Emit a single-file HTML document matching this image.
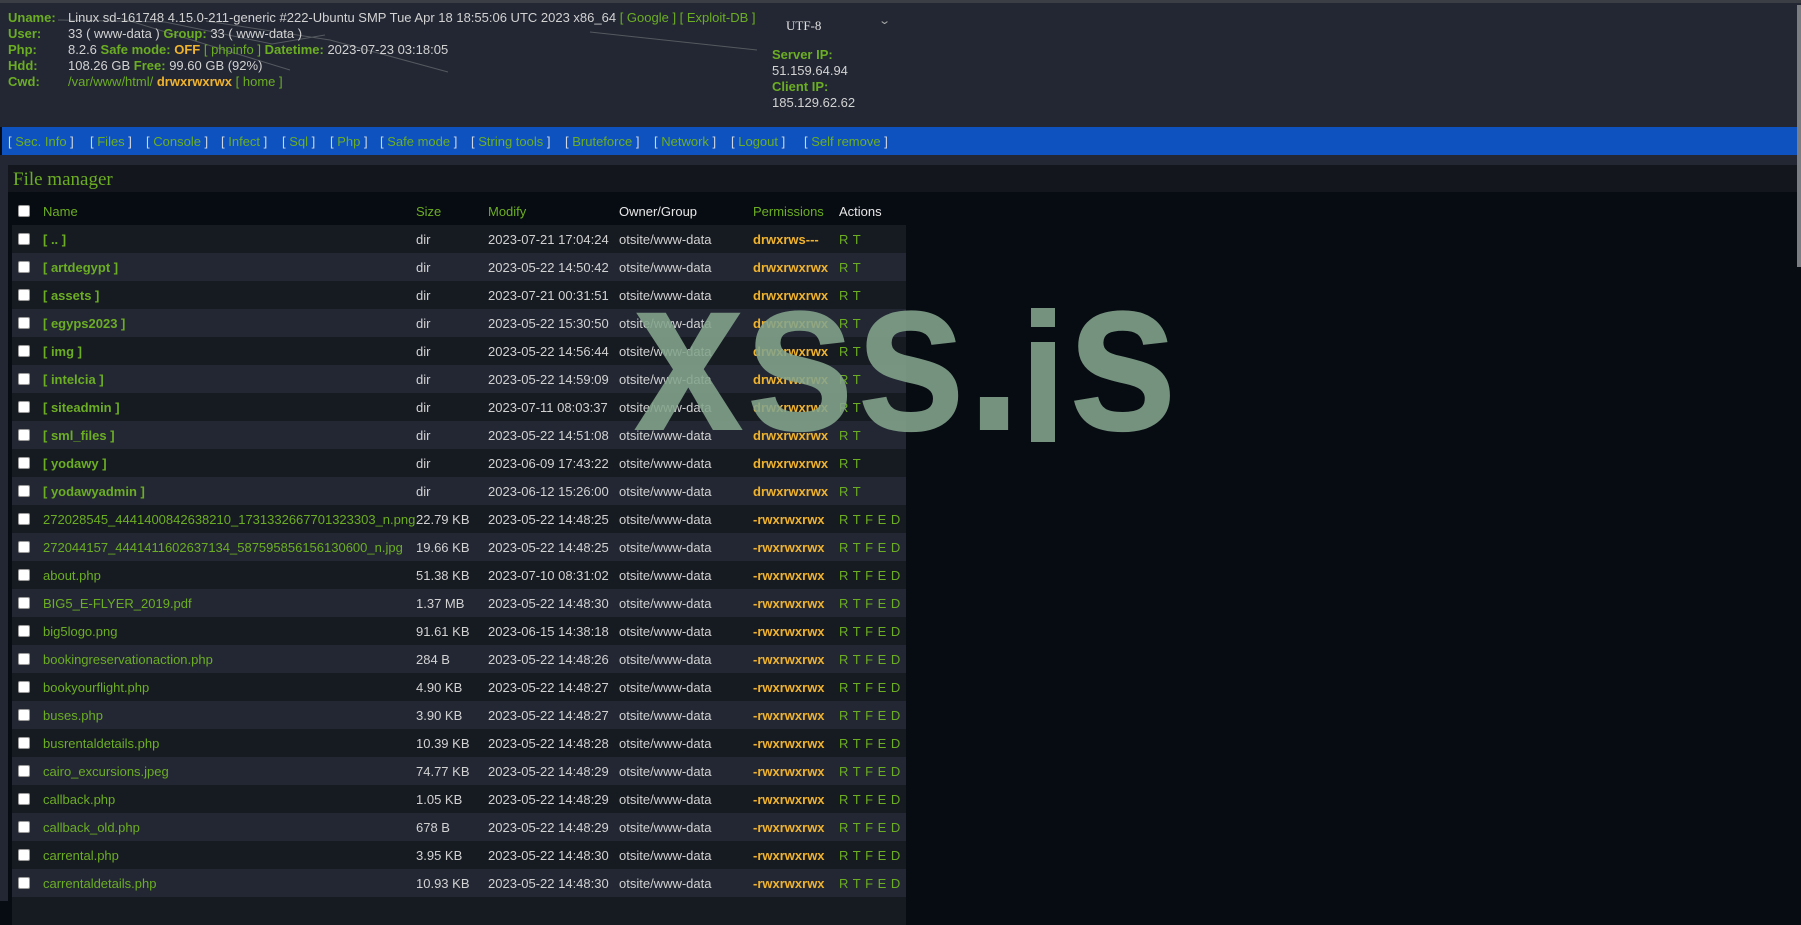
<!DOCTYPE html>
<html><head><meta charset="utf-8"><style>
*{margin:0;padding:0;box-sizing:border-box}
html,body{width:1801px;height:901px;overflow:hidden;background:#070b12;font-family:"Liberation Sans",Arial,sans-serif;font-size:13px;color:#d2d2d2}
.top{position:absolute;left:0;top:0;width:1801px;height:3px;background:#3b3e44}
.hdr{position:absolute;left:0;top:3px;width:1801px;height:124px;background:#222733}
.l{position:absolute;left:8px;font-weight:bold;color:#6cae23;line-height:16px}
.v{position:absolute;left:68px;line-height:16px;white-space:nowrap}
.g{color:#6cae23}.gb{color:#6cae23;font-weight:bold}.o{color:#f0b32e;font-weight:bold}
.nav{position:absolute;left:2px;top:127px;width:1795px;height:28px;background:#0e52bf}
.nav span{position:absolute;top:7px;color:#cfd6e0;white-space:nowrap}
.nav b{font-weight:normal;color:#6cae23}
.gap{position:absolute;left:0;top:155px;width:1801px;height:10px;background:#222733}
.lstrip{position:absolute;left:0;top:155px;width:8px;height:746px;background:#222733}
.title{position:absolute;left:8px;top:165px;width:1789px;height:27px;background:#13161d;font-family:"Liberation Serif",serif;font-size:19px;color:#6cae23;padding:4px 0 0 5px}
.row{position:absolute;left:12px;width:894px;height:28px}
.row span{position:absolute;top:7px;white-space:nowrap}
.cb{position:absolute;left:6px;top:8px;width:12px;height:12px;background:#fff;border:1px solid #999;border-radius:2px}
.d{background:#161a21}.li{background:#222733}
.nm{left:31px;color:#6cae23}.dir{font-weight:bold}
.sz{left:404px}.md{left:476px}.ow{left:607px}.pm{left:741px;color:#f0b32e;font-weight:bold}.ac{left:827px;color:#6cae23;word-spacing:1px}
.wm{position:absolute;top:243px;font-weight:bold;font-size:222px;line-height:1;color:#84a58d;opacity:.88;transform:scaleX(.9);transform-origin:0 0;white-space:nowrap}
.bx{position:absolute;background:#84a58d;opacity:.88}
.sb{position:absolute;left:1797px;top:5px;width:4px;height:262px;background:#7a7d82}
</style></head><body>
<div class="top"></div>
<div class="hdr"></div>
<svg style="position:absolute;left:0;top:0" width="800" height="80"><g stroke="#55595f" stroke-width="1" fill="none"><path d="M58 20 L165 22 L272 44 L325 35 M120 18 L290 70 M206 21 L330 40 L448 72 M590 32 L757 50"/></g></svg>
<div class="l" style="top:10px">Uname:</div><div class="v" style="top:10px">Linux sd-161748 4.15.0-211-generic #222-Ubuntu SMP Tue Apr 18 18:55:06 UTC 2023 x86_64 <span class="g">[ Google ] [ Exploit-DB ]</span></div>
<div class="l" style="top:26px">User:</div><div class="v" style="top:26px">33 ( www-data ) <span class="gb">Group:</span> 33 ( www-data )</div>
<div class="l" style="top:42px">Php:</div><div class="v" style="top:42px">8.2.6 <span class="gb">Safe mode:</span> <span class="o">OFF</span> <span class="g">[ phpinfo ]</span> <span class="gb">Datetime:</span> 2023-07-23 03:18:05</div>
<div class="l" style="top:58px">Hdd:</div><div class="v" style="top:58px">108.26 GB <span class="gb">Free:</span> 99.60 GB (92%)</div>
<div class="l" style="top:74px">Cwd:</div><div class="v" style="top:74px"><span class="g">/var/www/html/</span> <span class="o">drwxrwxrwx</span> <span class="g">[ home ]</span></div>
<div style="position:absolute;left:786px;top:18px;font-family:'Liberation Serif',serif;font-size:13px;color:#e0e0e0">UTF-8</div>
<div style="position:absolute;left:880px;top:14px;font-size:11px;color:#aaa;transform:scaleX(1.4)">&#8964;</div>
<div style="position:absolute;left:772px;top:47px;line-height:16px"><span class="gb">Server IP:</span><br>51.159.64.94<br><span class="gb">Client IP:</span><br>185.129.62.62</div>
<div class="nav">
<span style="left:6px">[ <b>Sec. Info</b> ]</span><span style="left:88px">[ <b>Files</b> ]</span><span style="left:144px">[ <b>Console</b> ]</span><span style="left:219px">[ <b>Infect</b> ]</span><span style="left:280px">[ <b>Sql</b> ]</span><span style="left:328px">[ <b>Php</b> ]</span><span style="left:378px">[ <b>Safe mode</b> ]</span><span style="left:469px">[ <b>String tools</b> ]</span><span style="left:563px">[ <b>Bruteforce</b> ]</span><span style="left:652px">[ <b>Network</b> ]</span><span style="left:729px">[ <b>Logout</b> ]</span><span style="left:802px">[ <b>Self remove</b> ]</span>
</div>
<div class="gap"></div><div class="lstrip"></div>
<div class="title">File manager</div>
<div class="row" style="top:197px"><div class="cb"></div><span class="nm">Name</span><span class="sz" style="color:#6cae23">Size</span><span class="md" style="color:#6cae23">Modify</span><span class="ow" style="color:#e8e8e8">Owner/Group</span><span class="pm" style="color:#6cae23;font-weight:normal">Permissions</span><span class="ac" style="color:#e8e8e8">Actions</span></div>
<div class="row d" style="top:225px"><div class="cb"></div><span class="nm dir">[ .. ]</span><span class="sz">dir</span><span class="md">2023-07-21 17:04:24</span><span class="ow">otsite/www-data</span><span class="pm">drwxrws---</span><span class="ac">R T</span></div>
<div class="row li" style="top:253px"><div class="cb"></div><span class="nm dir">[ artdegypt ]</span><span class="sz">dir</span><span class="md">2023-05-22 14:50:42</span><span class="ow">otsite/www-data</span><span class="pm">drwxrwxrwx</span><span class="ac">R T</span></div>
<div class="row d" style="top:281px"><div class="cb"></div><span class="nm dir">[ assets ]</span><span class="sz">dir</span><span class="md">2023-07-21 00:31:51</span><span class="ow">otsite/www-data</span><span class="pm">drwxrwxrwx</span><span class="ac">R T</span></div>
<div class="row li" style="top:309px"><div class="cb"></div><span class="nm dir">[ egyps2023 ]</span><span class="sz">dir</span><span class="md">2023-05-22 15:30:50</span><span class="ow">otsite/www-data</span><span class="pm">drwxrwxrwx</span><span class="ac">R T</span></div>
<div class="row d" style="top:337px"><div class="cb"></div><span class="nm dir">[ img ]</span><span class="sz">dir</span><span class="md">2023-05-22 14:56:44</span><span class="ow">otsite/www-data</span><span class="pm">drwxrwxrwx</span><span class="ac">R T</span></div>
<div class="row li" style="top:365px"><div class="cb"></div><span class="nm dir">[ intelcia ]</span><span class="sz">dir</span><span class="md">2023-05-22 14:59:09</span><span class="ow">otsite/www-data</span><span class="pm">drwxrwxrwx</span><span class="ac">R T</span></div>
<div class="row d" style="top:393px"><div class="cb"></div><span class="nm dir">[ siteadmin ]</span><span class="sz">dir</span><span class="md">2023-07-11 08:03:37</span><span class="ow">otsite/www-data</span><span class="pm">drwxrwxrwx</span><span class="ac">R T</span></div>
<div class="row li" style="top:421px"><div class="cb"></div><span class="nm dir">[ sml_files ]</span><span class="sz">dir</span><span class="md">2023-05-22 14:51:08</span><span class="ow">otsite/www-data</span><span class="pm">drwxrwxrwx</span><span class="ac">R T</span></div>
<div class="row d" style="top:449px"><div class="cb"></div><span class="nm dir">[ yodawy ]</span><span class="sz">dir</span><span class="md">2023-06-09 17:43:22</span><span class="ow">otsite/www-data</span><span class="pm">drwxrwxrwx</span><span class="ac">R T</span></div>
<div class="row li" style="top:477px"><div class="cb"></div><span class="nm dir">[ yodawyadmin ]</span><span class="sz">dir</span><span class="md">2023-06-12 15:26:00</span><span class="ow">otsite/www-data</span><span class="pm">drwxrwxrwx</span><span class="ac">R T</span></div>
<div class="row d" style="top:505px"><div class="cb"></div><span class="nm">272028545_4441400842638210_1731332667701323303_n.png</span><span class="sz">22.79 KB</span><span class="md">2023-05-22 14:48:25</span><span class="ow">otsite/www-data</span><span class="pm">-rwxrwxrwx</span><span class="ac">R T F E D</span></div>
<div class="row li" style="top:533px"><div class="cb"></div><span class="nm">272044157_4441411602637134_587595856156130600_n.jpg</span><span class="sz">19.66 KB</span><span class="md">2023-05-22 14:48:25</span><span class="ow">otsite/www-data</span><span class="pm">-rwxrwxrwx</span><span class="ac">R T F E D</span></div>
<div class="row d" style="top:561px"><div class="cb"></div><span class="nm">about.php</span><span class="sz">51.38 KB</span><span class="md">2023-07-10 08:31:02</span><span class="ow">otsite/www-data</span><span class="pm">-rwxrwxrwx</span><span class="ac">R T F E D</span></div>
<div class="row li" style="top:589px"><div class="cb"></div><span class="nm">BIG5_E-FLYER_2019.pdf</span><span class="sz">1.37 MB</span><span class="md">2023-05-22 14:48:30</span><span class="ow">otsite/www-data</span><span class="pm">-rwxrwxrwx</span><span class="ac">R T F E D</span></div>
<div class="row d" style="top:617px"><div class="cb"></div><span class="nm">big5logo.png</span><span class="sz">91.61 KB</span><span class="md">2023-06-15 14:38:18</span><span class="ow">otsite/www-data</span><span class="pm">-rwxrwxrwx</span><span class="ac">R T F E D</span></div>
<div class="row li" style="top:645px"><div class="cb"></div><span class="nm">bookingreservationaction.php</span><span class="sz">284 B</span><span class="md">2023-05-22 14:48:26</span><span class="ow">otsite/www-data</span><span class="pm">-rwxrwxrwx</span><span class="ac">R T F E D</span></div>
<div class="row d" style="top:673px"><div class="cb"></div><span class="nm">bookyourflight.php</span><span class="sz">4.90 KB</span><span class="md">2023-05-22 14:48:27</span><span class="ow">otsite/www-data</span><span class="pm">-rwxrwxrwx</span><span class="ac">R T F E D</span></div>
<div class="row li" style="top:701px"><div class="cb"></div><span class="nm">buses.php</span><span class="sz">3.90 KB</span><span class="md">2023-05-22 14:48:27</span><span class="ow">otsite/www-data</span><span class="pm">-rwxrwxrwx</span><span class="ac">R T F E D</span></div>
<div class="row d" style="top:729px"><div class="cb"></div><span class="nm">busrentaldetails.php</span><span class="sz">10.39 KB</span><span class="md">2023-05-22 14:48:28</span><span class="ow">otsite/www-data</span><span class="pm">-rwxrwxrwx</span><span class="ac">R T F E D</span></div>
<div class="row li" style="top:757px"><div class="cb"></div><span class="nm">cairo_excursions.jpeg</span><span class="sz">74.77 KB</span><span class="md">2023-05-22 14:48:29</span><span class="ow">otsite/www-data</span><span class="pm">-rwxrwxrwx</span><span class="ac">R T F E D</span></div>
<div class="row d" style="top:785px"><div class="cb"></div><span class="nm">callback.php</span><span class="sz">1.05 KB</span><span class="md">2023-05-22 14:48:29</span><span class="ow">otsite/www-data</span><span class="pm">-rwxrwxrwx</span><span class="ac">R T F E D</span></div>
<div class="row li" style="top:813px"><div class="cb"></div><span class="nm">callback_old.php</span><span class="sz">678 B</span><span class="md">2023-05-22 14:48:29</span><span class="ow">otsite/www-data</span><span class="pm">-rwxrwxrwx</span><span class="ac">R T F E D</span></div>
<div class="row d" style="top:841px"><div class="cb"></div><span class="nm">carrental.php</span><span class="sz">3.95 KB</span><span class="md">2023-05-22 14:48:30</span><span class="ow">otsite/www-data</span><span class="pm">-rwxrwxrwx</span><span class="ac">R T F E D</span></div>
<div class="row li" style="top:869px"><div class="cb"></div><span class="nm">carrentaldetails.php</span><span class="sz">10.93 KB</span><span class="md">2023-05-22 14:48:30</span><span class="ow">otsite/www-data</span><span class="pm">-rwxrwxrwx</span><span class="ac">R T F E D</span></div>
<div class="row d" style="top:897px"></div>
<div class="wm" style="left:633px">xss.</div>
<div class="bx" style="left:1031px;top:308px;width:24px;height:19px"></div>
<div class="bx" style="left:1031px;top:342px;width:24px;height:100px"></div>
<div class="wm" style="left:1067px">s</div>
<div class="sb"></div>
</body></html>
